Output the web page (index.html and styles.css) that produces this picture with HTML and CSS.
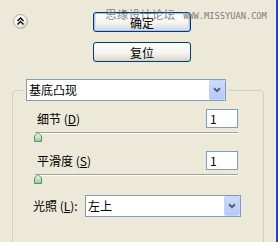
FILE: index.html
```html
<!DOCTYPE html>
<html>
<head>
<meta charset="utf-8">
<link rel="stylesheet" href="styles.css">
</head>
<body>
<div class="window">
  <div class="top">
    <div class="collapse">
      <svg width="15" height="15" viewBox="0 0 15 15">
        <defs>
          <radialGradient id="cg" cx="0.4" cy="0.35" r="0.7">
            <stop offset="0" stop-color="#ffffff"/>
            <stop offset="0.6" stop-color="#F3F2EC"/>
            <stop offset="1" stop-color="#C9C6BA"/>
          </radialGradient>
        </defs>
        <circle cx="7.5" cy="7.5" r="7" fill="url(#cg)" stroke="#B5B2A6" stroke-width="1"/>
        <polyline points="4.5,7 7.5,4 10.5,7" fill="none" stroke="#000" stroke-width="1.4"/>
        <polyline points="4.5,10.5 7.5,7.5 10.5,10.5" fill="none" stroke="#000" stroke-width="1.4"/>
      </svg>
    </div>
    <div class="btns">
      <div class="btn btn-default">确定</div>
      <div class="btn">复位</div>
    </div>
    <div class="watermark"><span class="wm-cn">思缘设计论坛</span><span class="wm-en">WWW.MISSYUAN.COM</span></div>
  </div>
  <fieldset class="group">
    <legend class="group-legend">
      <div class="combo combo-wide">
        <span class="combo-text">基底凸现</span>
        <span class="combo-btn"><svg width="8" height="6" viewBox="0 0 8 6"><polyline points="1,1.2 4,4.2 7,1.2" fill="none" stroke="#4D6185" stroke-width="2"/></svg></span>
      </div>
    </legend>
    <div class="param">
      <span class="label">细节 (<u>D</u>)</span>
      <div class="num">1</div>
    </div>
    <div class="slider">
      <div class="track"></div>
      <svg class="thumb" width="8" height="10" viewBox="0 0 8 10">
        <defs>
          <linearGradient id="tg1" x1="0" y1="0" x2="0" y2="1">
            <stop offset="0" stop-color="#F6FBF6"/>
            <stop offset="1" stop-color="#8FCB9B"/>
          </linearGradient>
        </defs>
        <polygon points="4,0.5 7.5,4 7.5,9.5 0.5,9.5 0.5,4" fill="url(#tg1)" stroke="#5B8F68" stroke-width="1"/>
      </svg>
    </div>
    <div class="param param-2">
      <span class="label">平滑度 (<u>S</u>)</span>
      <div class="num">1</div>
    </div>
    <div class="slider">
      <div class="track"></div>
      <svg class="thumb" width="8" height="10" viewBox="0 0 8 10">
        <defs>
          <linearGradient id="tg2" x1="0" y1="0" x2="0" y2="1">
            <stop offset="0" stop-color="#F6FBF6"/>
            <stop offset="1" stop-color="#8FCB9B"/>
          </linearGradient>
        </defs>
        <polygon points="4,0.5 7.5,4 7.5,9.5 0.5,9.5 0.5,4" fill="url(#tg2)" stroke="#5B8F68" stroke-width="1"/>
      </svg>
    </div>
    <div class="param param-light">
      <span class="label">光照 (<u>L</u>):</span>
      <div class="combo combo-light">
        <span class="combo-text">左上</span>
        <span class="combo-btn"><svg width="8" height="6" viewBox="0 0 8 6"><polyline points="1,1.2 4,4.2 7,1.2" fill="none" stroke="#4D6185" stroke-width="2"/></svg></span>
      </div>
    </div>
  </fieldset>
</div>
</body>
</html>
```
FILE: styles.css
```css
html, body {
  margin: 0;
  padding: 0;
}
body {
  width: 278px;
  height: 242px;
  overflow: hidden;
  background: #ECE9D8;
  font-family: "Noto Sans CJK SC", "Liberation Sans", sans-serif;
  font-size: 12px;
  color: #000;
}
.window {
  position: relative;
  width: 278px;
  height: 242px;
  box-sizing: border-box;
  border-right: 2px solid #1448D2;
  overflow: hidden;
}
.top {
  position: relative;
  display: flex;
  align-items: flex-start;
  box-sizing: border-box;
  height: 79px;
  padding: 12px 0 0 13px;
}
.collapse {
  width: 15px;
  height: 15px;
  margin-top: 2px;
}
.collapse svg {
  display: block;
}
.btns {
  margin-left: 65px;
  display: flex;
  flex-direction: column;
  gap: 10px;
}
.btn {
  width: 98px;
  height: 20px;
  box-sizing: border-box;
  border: 1px solid #003C74;
  border-radius: 3px;
  background: linear-gradient(#FFFFFF, #F4F4F0 55%, #E3E0D6 85%, #D4CFC3);
  display: flex;
  align-items: center;
  justify-content: center;
  line-height: 1;
  padding-top: 1px;
}
.btn-default {
  box-shadow: inset 0 0 0 1px #A9C4F0, inset 0 -1px 0 2px #CFDFFA;
}
.watermark {
  position: absolute;
  left: 105px;
  top: 8px;
  display: flex;
  align-items: baseline;
  gap: 8px;
  line-height: 1;
}
.wm-cn {
  font-size: 11.7px;
  color: rgba(95, 95, 95, 0.75);
}
.wm-en {
  font-family: "DejaVu Sans Mono", monospace;
  font-size: 8.7px;
  color: #7C7C7C;
}
.group {
  margin: 0 0 0 12px;
  width: 252px;
  min-height: 220px;
  box-sizing: border-box;
  border: 1px solid #D0D0BF;
  border-radius: 4px;
  padding: 0;
}
.group-legend {
  margin-left: 10px;
  padding: 0 3px;
}
.combo {
  display: flex;
  align-items: center;
  height: 22px;
  box-sizing: border-box;
  border: 1px solid #7F9DB9;
  background: #FFFFFF;
  padding-left: 2px;
  line-height: 1;
}
.combo-wide {
  width: 200px;
}
.combo-light {
  width: 156px;
  margin-left: auto;
}
.combo-text {
  flex: 1;
}
.combo-btn {
  width: 16px;
  height: 20px;
  box-sizing: border-box;
  border: 1px solid #C3D3FD;
  border-radius: 2px;
  background: linear-gradient(#CDDBFD, #B6CAF6);
  display: flex;
  align-items: center;
  justify-content: center;
}
.combo-btn svg {
  display: block;
}
.param {
  display: flex;
  align-items: center;
  height: 19px;
  margin-top: 8px;
  padding: 0 25px 0 24px;
  line-height: 1;
}
.param-2 {
  margin-top: 9px;
}
.param-light {
  height: 22px;
  margin-top: 11px;
  padding: 0 22px 0 20px;
}
.label u {
  text-decoration: underline;
}
.num {
  margin-left: auto;
  width: 32px;
  height: 19px;
  box-sizing: border-box;
  border: 1px solid #7F9DB9;
  background: #FFFFFF;
  padding-left: 3px;
  display: flex;
  align-items: center;
}
.slider {
  position: relative;
  height: 10px;
  margin: 4px 25px 0 22px;
}
.track {
  margin-top: 4px;
  height: 1px;
  background: #A3A297;
  box-shadow: 0 1px 0 #FFFFFF;
}
.thumb {
  position: absolute;
  left: -1px;
  top: 0;
  display: block;
}
```
